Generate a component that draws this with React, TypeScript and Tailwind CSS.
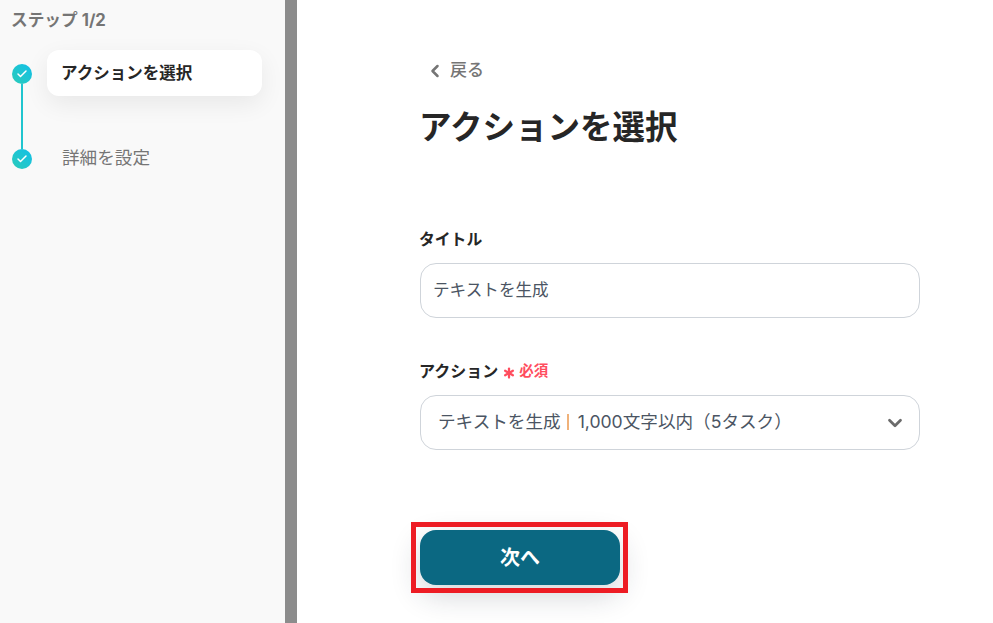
import { Asterisk, Check, ChevronDown, ChevronLeft } from 'lucide-react';

function StepDot() {
  return (
    <div className="flex h-5 w-5 items-center justify-center rounded-full bg-gradient-to-tr from-[#2bcbb8] to-[#12bfe8]">
      <Check className="h-3 w-3 text-white" strokeWidth={3} />
    </div>
  );
}

export default function App() {
  return (
    <div className="flex h-[623px] w-[993px] overflow-hidden bg-white font-['Inter','Noto_Sans_CJK_JP',sans-serif]">
      {/* Sidebar */}
      <aside className="w-[285px] shrink-0 bg-[#f9f9f9] pl-3 pt-2">
        <p className="-ml-px text-[16.7px] leading-6 font-bold text-[#757575]">ステップ 1/2</p>
        <div className="mt-[18px] flex">
          <div className="flex w-5 flex-col items-center pt-[14px]">
            <StepDot />
            <div className="h-[65px] w-0.5 bg-[#1fc5cf]" />
            <StepDot />
          </div>
          <div className="ml-[15px] w-[215px]">
            <div className="flex h-[46px] items-center rounded-xl bg-white pl-[14px] text-[16.5px] font-bold text-[#262626] shadow-[0_8px_24px_rgba(0,0,0,0.07)]">
              アクションを選択
            </div>
            <div className="mt-[39px] pl-[15px] text-[17.6px] leading-[46px] text-[#757575]">詳細を設定</div>
          </div>
        </div>
      </aside>

      <div className="w-3 shrink-0 bg-[#8c8c8c]" />

      {/* Main */}
      <main className="relative flex-1 pl-[123px] pt-[59px]">
        <div className="w-[500px]">
          <button className="flex h-6 items-center pl-2 text-[17px] font-medium text-[#757575]">
            <ChevronLeft className="mr-[5px] -ml-[3px] h-5 w-5" strokeWidth={3} />
            戻る
          </button>
          <h1 className="mt-[18px] -ml-px text-[32.5px] leading-[54px] font-bold text-[#262626]">アクションを選択</h1>

          <label className="mt-[73px] -ml-px block text-[15.8px] leading-6 font-bold text-[#262626]">タイトル</label>
          <div className="mt-[11px] flex h-[55px] items-center rounded-2xl border border-[#cfd4da] pl-3 text-[16.6px] text-[#4b5563]">
            テキストを生成
          </div>

          <div className="mt-[41px] -ml-px flex h-6 items-center">
            <span className="text-base font-bold text-[#262626]">アクション</span>
            <Asterisk className="ml-[2px] mt-1 h-[18px] w-[18px] text-[#ff4d5e]" strokeWidth={3} />
            <span className="ml-px text-[14.5px] font-bold text-[#ff4d5e]">必須</span>
          </div>
          <div className="mt-3 flex h-[55px] items-center justify-between rounded-2xl border border-[#cfd4da] pl-[17px] pr-[13px] text-[17.6px] text-[#4b5563]">
            <span className="flex items-center">
              テキストを生成
              <span className="ml-[6px] mr-[9px] h-4 w-0.5 bg-[#f0b27a]" />
              1,000文字以内（5タスク）
            </span>
            <ChevronDown className="h-[22px] w-[22px] text-[#6b6b6b]" strokeWidth={3} />
          </div>

          <button className="mt-[80px] h-[55px] w-[200px] rounded-2xl bg-[#0b6882] text-xl font-bold text-white shadow-[0_10px_30px_rgba(30,40,60,0.2)]">
            次へ
          </button>
        </div>

        {/* annotation box */}
        <div className="absolute left-[114px] top-[522px] h-[71px] w-[217px] border-[5px] border-[#ed1c24]" />
      </main>
    </div>
  );
}
